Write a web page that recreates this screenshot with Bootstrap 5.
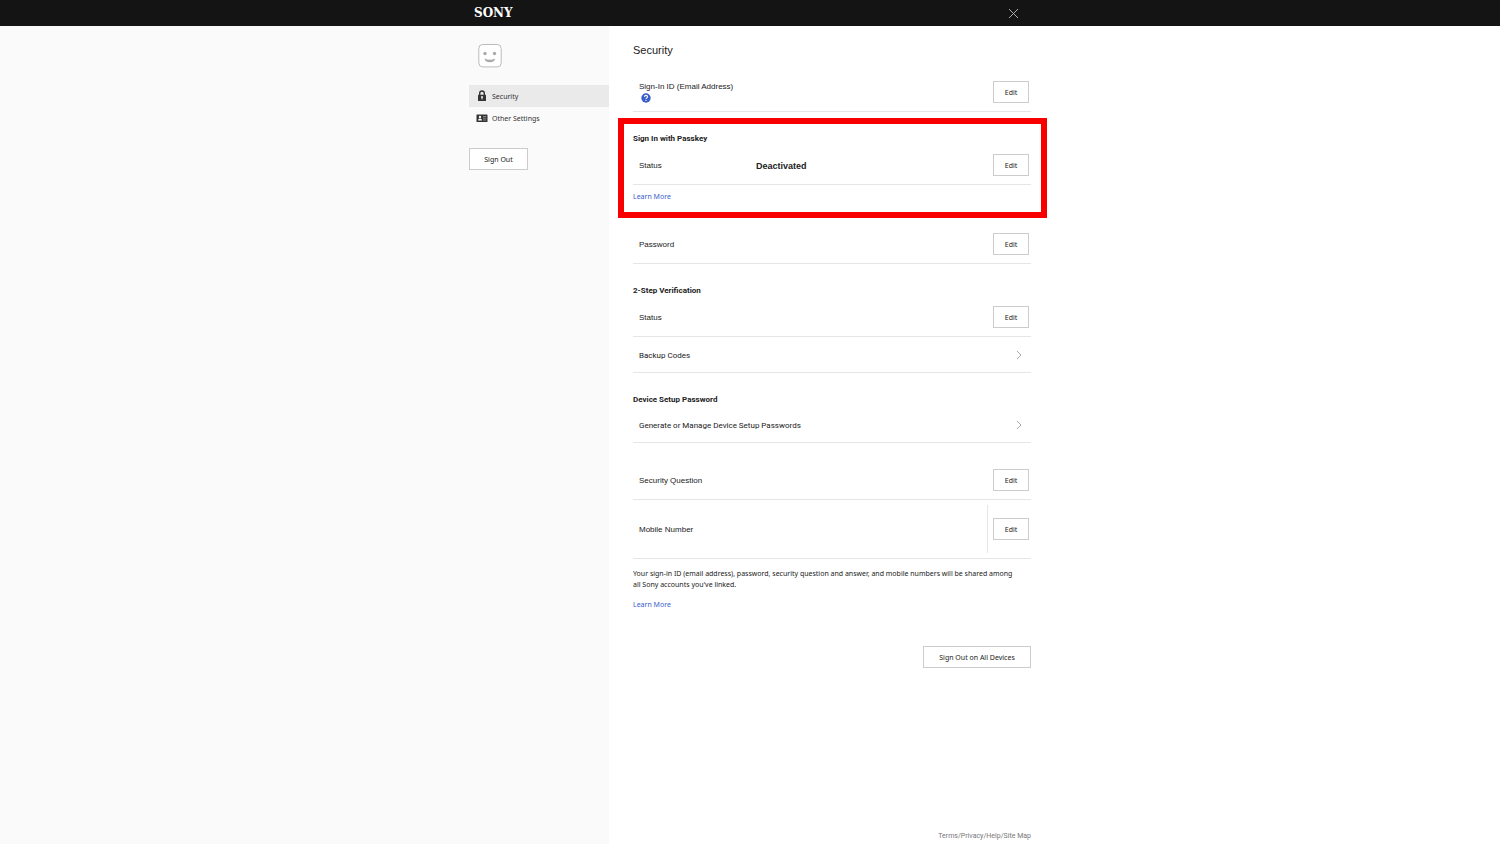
<!DOCTYPE html>
<html lang="en">
<head>
<meta charset="utf-8">
<meta name="viewport" content="width=device-width, initial-scale=1">
<title>Security</title>
<link rel="stylesheet" href="https://cdn.jsdelivr.net/npm/bootstrap@5.3.0/dist/css/bootstrap.min.css">
<style>
  body { font: 8px/12px "Liberation Sans", Arial, sans-serif; color: #222; background: #fff; }
  a { text-decoration: none; color: #3a5fcb; }
  h1 { font-size: 11px; line-height: 16px; margin: 0 0 15px; font-weight: 400; }
  h2 { font: bold 8px/12px Roboto, sans-serif; margin: 21px 0 1px; }
  .topbar { background: #141414; height: 26px; }
  .topbar-inner { width: 100%; max-width: 562px; padding: 0 12px 0 5px; }
  .close-btn { width: 12px; height: 12px; padding: 0; border: 0; background: none; color: #aaa; }
  .side { width: calc(50% - 141px); background: #fafafa; }
  .side-inner { width: 140px; font: 7px/12px "Noto Sans", sans-serif; }
  .avatar { margin: 17px 9px; }
  .side-link { height: 22px; padding-left: 7px; color: #333; gap: 4px; }
  .side-link.active { background: #eaeaea; }
  .side-link span, .line-item span, .status { padding-top: 2px; }
  .act { height: 22px; border: 1px solid #ccc; border-radius: 0; background: #fff; color: #222; font: 7px/12px "Noto Sans", sans-serif; padding: 2px 0 0; }
  .act-edit { width: 36px; }
  .act-out { width: 59px; margin-top: 19px; }
  .act-all { width: 108px; margin-top: 35px; }
  .content { max-width: 422px; padding: 16px 0 2px 24px; }
  .line-item { padding: 8px 2px 8px 6px; border-bottom: 1px solid #e6e6e6; }
  .item-label { width: 117px; }
  .status { font-size: 9px; }
  .nav-item-row { height: 36px; padding-right: 8px; font-family: Roboto, sans-serif; color: #222; }
  .note-text, .more { font: 7px/11px "Noto Sans", sans-serif; }
  .note-text { margin: 9px 0; padding-right: 12px; }
  .more { line-height: 12px; }
  .passkey .more { margin-top: 6px; }
  .after-passkey { margin-top: 22px; }
  .after-device { margin-top: 18px; }
  .help-btn { width: 10px; height: 10px; padding: 0; border: 0; background: none; margin-left: 2px; }
  .marker { inset: 6px -16px -15px -15px; border: 6px solid #f80000; pointer-events: none; }
  .mobile { padding: 5px 2px 5px 6px; }
  .mobile-act { height: 48px; border-left: 1px solid #e6e6e6; padding-left: 5px; }
  .foot { font: 7px/12px Roboto, sans-serif; color: #777; }
  .foot a { color: #777; }
</style>
<script src="https://cdn.jsdelivr.net/npm/bootstrap@5.3.0/dist/js/bootstrap.bundle.min.js"></script>
</head>
<body class="d-flex flex-column min-vh-100">
<header class="topbar d-flex justify-content-center">
  <div class="topbar-inner d-flex justify-content-between align-items-center">
    <a class="d-block" href="#" aria-label="Sony home"><svg class="d-block" width="46" height="26" viewBox="0 0 46 26"><text x="0" y="17" fill="#fff" font-family="'DejaVu Serif', serif" font-weight="bold" font-size="12">SONY</text></svg></a>
    <button class="close-btn d-flex" type="button" aria-label="Close"><svg width="12" height="12" viewBox="0 0 12 12" stroke="currentColor" fill="none"><path d="M2 2l9 9M11 2l-9 9"/></svg></button>
  </div>
</header>
<div class="d-flex flex-grow-1">
  <aside class="side d-flex justify-content-end">
    <div class="side-inner">
      <svg class="avatar d-block" width="24" height="25" viewBox="0 0 24 25"><rect x=".8" y="1.500" width="22.400" height="22.400" rx="4" fill="#fff" stroke="#bbb"/><circle cx="7" cy="10.500" r="1.700" fill="#aaa"/><circle cx="16.500" cy="10.500" r="1.700" fill="#aaa"/><path d="M6.500 15.500q5.300 2.600 10.600 0l-1 2.400q-4.300 2.600-8.600 0z" fill="#aaa"/></svg>
      <nav>
        <a class="side-link active d-flex align-items-center" href="#" aria-current="page"><svg width="12" height="12" viewBox="0 0 12 12"><path d="M3.700 5V3.300a2.300 2.300 0 0 1 4.600 0V5" fill="none" stroke="#333" stroke-width="1.400"/><rect x="2" y="4.700" width="8" height="6.300" rx=".5" fill="#333"/><circle cx="6" cy="7" r="1" fill="#eaeaea"/><path d="M6 7v2.400" stroke="#eaeaea"/></svg><span>Security</span></a>
        <a class="side-link d-flex align-items-center" href="#"><svg width="12" height="12" viewBox="0 0 12 12"><rect x=".5" y="2.500" width="11" height="7.500" rx=".6" fill="#333"/><circle cx="4" cy="5" r="1.200" fill="#fafafa"/><path d="M2 8.600q0-2.200 2-2.200t2 2.200z" fill="#fafafa"/><path d="M7 4.500h3.200M7 6.200h3.200M7 8h3.200" stroke="#aaa" stroke-width=".7"/></svg><span>Other Settings</span></a>
      </nav>
      <button class="act act-out" type="button">Sign Out</button>
    </div>
  </aside>
  <main class="content flex-grow-1 d-flex flex-column">
    <h1>Security</h1>
    <div class="line-item d-flex justify-content-between">
      <div>
        <div>Sign-In ID (Email Address)</div>
        <button class="help-btn d-block" type="button" aria-label="Help"><svg class="d-block" width="10" height="10" viewBox="0 0 10 10"><circle cx="5" cy="5" r="4.700" fill="#3a5fcb"/><path d="M3.500 3.900q0-1.500 1.500-1.500t1.500 1.300q0 .8-.8 1.200T5 6.100M5 7v1" fill="none" stroke="#fff" stroke-width="1.100"/></svg></button>
      </div>
      <button class="act act-edit" type="button">Edit</button>
    </div>
    <section class="passkey position-relative">
      <h2>Sign In with Passkey</h2>
      <div class="line-item d-flex align-items-center">
        <span class="item-label">Status</span><strong class="status">Deactivated</strong>
        <button class="act act-edit ms-auto" type="button">Edit</button>
      </div>
      <a class="more d-block" href="#">Learn More</a>
      <div class="marker position-absolute"></div>
    </section>
    <div class="line-item after-passkey d-flex justify-content-between align-items-center">
      <span>Password</span><button class="act act-edit" type="button">Edit</button>
    </div>
    <h2>2-Step Verification</h2>
    <div class="line-item d-flex justify-content-between align-items-center">
      <span>Status</span><button class="act act-edit" type="button">Edit</button>
    </div>
    <a class="line-item nav-item-row d-flex justify-content-between align-items-center" href="#"><span>Backup Codes</span><svg width="8" height="10" viewBox="0 0 8 10" fill="none" stroke="#aaa"><path d="M2 1l4 4-4 4"/></svg></a>
    <h2>Device Setup Password</h2>
    <a class="line-item nav-item-row d-flex justify-content-between align-items-center" href="#"><span>Generate or Manage Device Setup Passwords</span><svg width="8" height="10" viewBox="0 0 8 10" fill="none" stroke="#aaa"><path d="M2 1l4 4-4 4"/></svg></a>
    <div class="line-item after-device d-flex justify-content-between align-items-center">
      <span>Security Question</span><button class="act act-edit" type="button">Edit</button>
    </div>
    <div class="line-item mobile d-flex justify-content-between align-items-center">
      <span>Mobile Number</span><div class="mobile-act d-flex align-items-center"><button class="act act-edit" type="button">Edit</button></div>
    </div>
    <p class="note-text">Your sign-in ID (email address), password, security question and answer, and mobile numbers will be shared among all Sony accounts you've linked.</p>
    <a class="more align-self-start" href="#">Learn More</a>
    <button class="act act-all align-self-end" type="button">Sign Out on All Devices</button>
    <footer class="foot mt-auto align-self-end"><a href="#">Terms</a>/<a href="#">Privacy</a>/<a href="#">Help</a>/<a href="#">Site Map</a></footer>
  </main>
</div>
</body>
</html>
